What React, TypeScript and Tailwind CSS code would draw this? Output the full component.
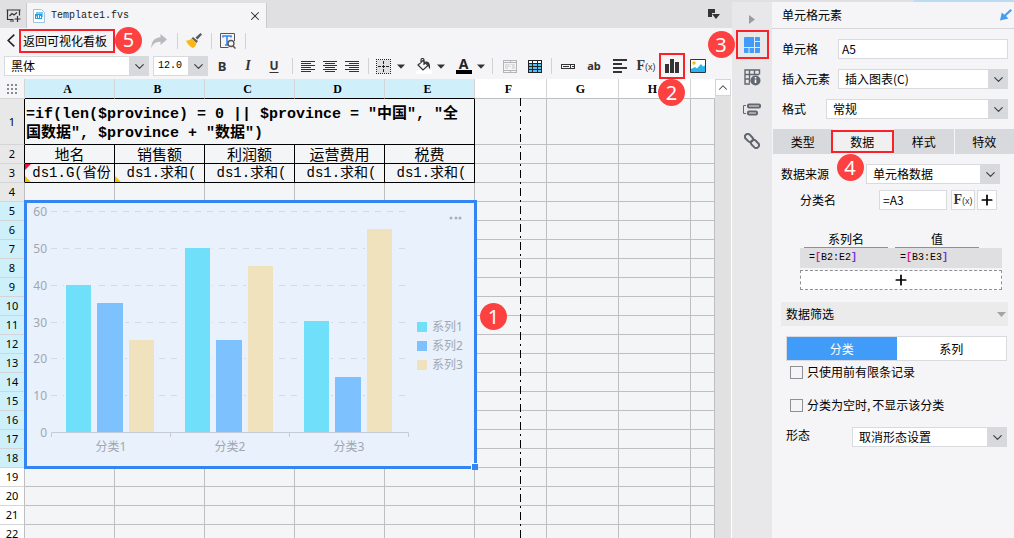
import React from "react";
import { ChevronDown, ChevronUp, X, Plus } from "lucide-react";

function Badge({ n, className }: { n: number; className: string }) {
  return (
    <span
      className={`pointer-events-none absolute z-20 flex size-[27px] items-center justify-center rounded-full bg-[#fd4141] font-['Noto_Sans'] text-xl leading-none text-white ${className}`}
    >
      {n}
    </span>
  );
}

function Select({ label, options, className, textClass = "pl-1.5" }: { label: string; options: string[]; className: string; textClass?: string }) {
  return (
    <div className={`relative h-5 ${className}`}>
      <select aria-label={label} className={`block h-full w-full appearance-none border border-[#d9dade] bg-white pr-5 leading-[18px] outline-none ${textClass}`}>
        {options.map((o) => (
          <option key={o}>{o}</option>
        ))}
      </select>
      <span className="pointer-events-none absolute inset-y-0 right-0 flex w-5 items-center justify-center bg-[#d8d9dd] text-[#444]">
        <ChevronDown size={15} strokeWidth={2} />
      </span>
    </div>
  );
}

function ToolButton({ label, className = "w-[26px]", children }: { label: string; className?: string; children: React.ReactNode }) {
  return (
    <button aria-label={label} className={`relative flex h-[26px] shrink-0 items-center justify-center ${className}`}>
      {children}
    </button>
  );
}

function Divider({ className = "w-2.5" }: { className?: string }) {
  return (
    <span className={`flex h-4 shrink-0 justify-center ${className}`}>
      <span className="w-px bg-[#d2d2d5]" />
    </span>
  );
}

function Caret() {
  return (
    <svg width="8" height="5" viewBox="0 0 8 5" fill="#333">
      <path d="M0 .5h8L4 4.8z" />
    </svg>
  );
}

function AlignIcon({ x }: { x: number[] }) {
  return (
    <svg width="14" height="11" viewBox="0 0 14 11" fill="#333" shapeRendering="crispEdges">
      {[0, 2, 4, 6, 8, 10].map((y, i) => (
        <rect key={y} x={i % 2 ? x[0] : 0} y={y} width={i % 2 ? 10 : 14} height="1" />
      ))}
    </svg>
  );
}

function FxIcon() {
  return (
    <span className="font-['Liberation_Serif',serif] text-sm font-bold leading-none text-[#333]">
      F<span className="font-['Liberation_Sans',sans-serif] text-[9px] font-normal">(x)</span>
    </span>
  );
}

function TabBar() {
  return (
    <div className="flex h-7 items-end bg-[#e0e0e2]">
      <button aria-label="新建模板" className="flex h-[25px] w-[26px] items-center justify-center">
        <svg width="15" height="13" viewBox="0 0 15 13" fill="none" stroke="#333" strokeWidth="1.2">
          <path d="M.5 1h14M1.500 1v9.500h6M13.500 1v5.500M4 12h4M3.500 7l2.500-2.500 2 1.500 3-2.500" />
          <path d="M11.500 7v6M8.500 10h6" />
        </svg>
      </button>
      <div className="flex h-[25px] w-[241px] items-center border-x border-[#c9c9cc] bg-[#f5f5f8] pl-1.5 pr-1">
        <svg width="12" height="14" viewBox="0 0 12 14">
          <path d="M.5.5h8l3 3v10H.5z" fill="#fff" stroke="#9fc4de" />
          <rect x="3" y="3" width="7" height="5" fill="#6fd0f5" />
          <rect x="2" y="5" width="7" height="5" fill="#2b9be0" />
          <path d="M3 9V7.500h1V9M5 9V6h1v3M7 9V7h1v2" fill="#fff" />
        </svg>
        <span className="ml-1.5 font-['Liberation_Mono',monospace] text-[10px] text-[#222]">Template1.fvs</span>
        <button aria-label="关闭" className="ml-auto text-[#333]">
          <X size={14} strokeWidth={1.8} />
        </button>
      </div>
      <button aria-label="窗口列表" className="ml-auto mr-3 self-center">
        <svg width="12" height="11" viewBox="0 0 12 11" fill="#333">
          <path d="M0 0h7v4H4v4H0zM4 5h8L8 10z" />
        </svg>
      </button>
    </div>
  );
}

function ActionBar() {
  return (
    <div className="flex h-[25px] items-center">
      <span className="flex w-[19px] justify-center pl-0.5">
        <svg width="8" height="13" viewBox="0 0 8 13" fill="none" stroke="#222" strokeWidth="1.600">
          <path d="M7.300.6L1.200 6.500l6.100 5.900" />
        </svg>
      </span>
      <button className="relative h-6 w-24 border-2 border-[#fb2128] text-left leading-5">
        <span className="pl-0.5">返回可视化看板</span>
        <Badge n={5} className="-top-1 left-[94px]" />
      </button>
      <ToolButton label="重做" className="ml-[31px] w-[26px]">
        <svg width="16" height="14" viewBox="0 0 16 14" fill="#b9babd">
          <path d="M9.500 0L16 5.500 9.500 11V7.800C5 7.300 2.200 9.500.3 14 .3 7.500 3.500 3.500 9.500 3.200z" />
        </svg>
      </ToolButton>
      <Divider />
      <ToolButton label="格式刷" className="w-6">
        <svg width="16" height="15" viewBox="0 0 16 15">
          <path d="M14.500 0L16 1.500 11.500 6.500 9.500 4.500z" fill="#555b66" />
          <path d="M7 4l5 4-1.500 2L5.500 5.500z" fill="#6a6257" />
          <path d="M5.500 5.500l5 4.500c-.5 3-2 4.500-4 5C3.500 13.500 1 10.500 0 7.500c2 .3 4-.5 5.500-2z" fill="#fbb812" />
        </svg>
      </ToolButton>
      <Divider />
      <ToolButton label="查找" className="w-6">
        <svg width="16" height="16" viewBox="0 0 16 16" fill="none" stroke="#555">
          <path d="M14.500 8V.5H.5v14h8" />
          <path d="M3 4.500V3h8v1.500M7 3v9M5 12h4" stroke="#3685f0" strokeWidth="1.600" />
          <circle cx="11" cy="10.500" r="3" fill="#f5f5f8" strokeWidth="1.300" />
          <path d="M13 13l2.500 2.500" strokeWidth="1.500" />
        </svg>
      </ToolButton>
      <Divider />
    </div>
  );
}

function FormatBar() {
  return (
    <div className="flex h-[26px] items-center pl-1">
      <Select label="字体" options={["黑体"]} className="w-[145px]" />
      <Select label="字号" options={["12.0"]} className="ml-1 mr-px w-[55px]" textClass="pl-1 font-['Liberation_Mono',monospace] text-[10px]" />
      <ToolButton label="加粗"><b className="font-['Noto_Sans'] text-[13px] font-bold text-[#333]">B</b></ToolButton>
      <ToolButton label="斜体"><i className="font-['Liberation_Serif',serif] text-sm font-bold text-[#333]">I</i></ToolButton>
      <ToolButton label="下划线"><u className="font-['Noto_Sans'] text-xs font-bold text-[#333] underline-offset-2">U</u></ToolButton>
      <Divider />
      <ToolButton label="左对齐" className="w-[22px]"><AlignIcon x={[0]} /></ToolButton>
      <ToolButton label="居中" className="w-[22px]"><AlignIcon x={[2]} /></ToolButton>
      <ToolButton label="右对齐" className="w-[22px]"><AlignIcon x={[4]} /></ToolButton>
      <Divider />
      <ToolButton label="边框" className="w-[21px]">
        <svg width="15" height="15" viewBox="0 0 15 15" fill="none" stroke="#222" shapeRendering="crispEdges">
          <rect x="1" y="1" width="13" height="13" fill="#e0e0e3" stroke="none" />
          <path d="M0 .5h15M0 14.500h15M.5 0v15M14.500 0v15" strokeDasharray="1 1" />
          <path d="M7.500 2v11M2 7.500h11" strokeDasharray="3 1" />
        </svg>
      </ToolButton>
      <ToolButton label="边框选项" className="mr-1.5 w-[13px]"><Caret /></ToolButton>
      <ToolButton label="填充颜色" className="w-[21px]">
        <svg width="16" height="16" viewBox="0 0 16 16" fill="none" stroke="#333">
          <rect y="12" width="16" height="4" fill="#fff" stroke="none" />
          <path d="M7 2.500L2 7l5 5 5-4.500zM5 5V2a1.500 1.500 0 0 1 3 0v5" strokeWidth="1.200" />
          <path d="M9 3.500c4-.5 5.500 2 5 7.500-1-.5-1.500-2-2-4z" fill="#333" stroke="none" />
        </svg>
      </ToolButton>
      <ToolButton label="填充选项" className="mr-1.5 w-[13px]"><Caret /></ToolButton>
      <ToolButton label="文字颜色" className="w-[21px] flex-col">
        <span className="font-['Noto_Sans'] text-sm font-bold leading-3 text-[#222]">A</span>
        <span className="h-1 w-4 bg-black" />
      </ToolButton>
      <ToolButton label="文字颜色选项" className="w-[13px]"><Caret /></ToolButton>
      <Divider />
      <ToolButton label="合并单元格" className="w-[25px]">
        <svg width="14" height="13" viewBox="0 0 14 13" fill="none" stroke="#b4b5b9" shapeRendering="crispEdges">
          <path d="M.5.5h13v12H.5zM.5 2.500h13M.5 10.500h13M7.500.5v2M7.500 10.500v2" />
          <rect x="2" y="4" width="10" height="5" fill="#dededf" stroke="none" />
          <path d="M5.500 5.500h3v3h-3v-1.500h3" stroke="#f5f5f8" />
        </svg>
      </ToolButton>
      <ToolButton label="插入表格" className="w-[25px]">
        <svg width="14" height="13" viewBox="0 0 14 13" shapeRendering="crispEdges">
          <rect width="14" height="13" fill="#222" />
          <path d="M1 1h3v2H1zM5 1h4v2H5zM10 1h3v2h-3z" fill="#fff" />
          <path d="M1 4h3v2H1zM5 4h4v2H5zM10 4h3v2h-3zM1 7h3v2H1zM5 7h4v2H5zM10 7h3v2h-3zM1 10h3v2H1zM5 10h4v2H5zM10 10h3v2h-3z" fill="#4fc3f5" />
        </svg>
      </ToolButton>
      <Divider className="w-2" />
      <ToolButton label="控件">
        <svg width="14" height="5" viewBox="0 0 14 5" fill="none" stroke="#333" shapeRendering="crispEdges">
          <path d="M.5.5h13v4H.5zM2 2.500h6M9.500 0v5M11 2.500h2" />
        </svg>
      </ToolButton>
      <ToolButton label="文本"><span className="font-['Noto_Sans'] text-[11px] font-bold text-[#333]">ab</span></ToolButton>
      <ToolButton label="富文本">
        <svg width="15" height="14" viewBox="0 0 15 14" fill="#333" shapeRendering="crispEdges">
          <path d="M0 0h14v2H0zM0 4h9v2H0zM0 8h14v2H0zM0 12h9v2H0z" />
        </svg>
      </ToolButton>
      <ToolButton label="公式"><FxIcon /></ToolButton>
      <ToolButton label="图表" className="w-[26px] border-2 border-[#fb2128]">
        <svg width="14" height="14" viewBox="0 0 14 14" fill="#333" shapeRendering="crispEdges">
          <path d="M0 5h4v9H0zM5 0h4v14H5zM10 3h4v11h-4z" />
        </svg>
        <Badge n={2} className="-left-[3px] top-6" />
      </ToolButton>
      <ToolButton label="图片">
        <svg width="16" height="14" viewBox="0 0 16 14">
          <path d="M.5.5h15v13H.5z" fill="#fff" stroke="#333" />
          <circle cx="4" cy="4" r="1.700" fill="#fbb812" />
          <path d="M1 10l4-2 2 1.500L11 5l2 2.500 2-1V13H1z" fill="#27b5f0" />
        </svg>
      </ToolButton>
    </div>
  );
}

const categories = [
  { name: "分类1", values: [40, 35, 25] },
  { name: "分类2", values: [50, 25, 45] },
  { name: "分类3", values: [30, 15, 55] },
];
const seriesColors = ["#6fdffa", "#7dc2ff", "#efe2bd"];
const barOffsets = [15, 46, 78];
const barWidths = [25, 26, 25];

function Chart() {
  const baseline = 230;
  const unit = 221 / 60;
  return (
    <svg width="449" height="265" viewBox="0 0 449 265" className="block font-['Noto_Sans','Noto_Sans_CJK_SC',sans-serif] text-xs" fill="#a0a7b1">
      {[0, 10, 20, 30, 40, 50, 60].map((v) => {
        const y = Math.round(baseline - v * unit) + 0.5;
        return (
          <g key={v}>
            <text x="22" y={y + 4} textAnchor="end">{v}</text>
            {v > 0 && <path d={`M26 ${y}H381`} stroke="#d3dae5" strokeDasharray="6 6" />}
          </g>
        );
      })}
      {categories.map((c, ci) => (
        <g key={c.name}>
          {c.values.map((v, i) => {
            const h = Math.round(v * unit);
            const x = 26 + ci * 119 + barOffsets[i];
            return (
              <g key={i}>
                <rect x={x - 2} y={baseline - h} width={barWidths[i] + 4} height={h} fill="#e9f1fc" />
                <rect x={x} y={baseline - h} width={barWidths[i]} height={h} fill={seriesColors[i]} />
              </g>
            );
          })}
          <text x={86 + ci * 119} y="249" textAnchor="middle">{c.name}</text>
        </g>
      ))}
      <path d="M26.500 235v-4.500h357V235M145.500 230.500v4.500M264.500 230.500v4.500" fill="none" stroke="#c5ccd7" />
      {["系列1", "系列2", "系列3"].map((s, i) => (
        <g key={s}>
          <rect x="392" y={120 + i * 19} width="10" height="10" fill={seriesColors[i]} />
          <text x="407" y={129 + i * 19}>{s}</text>
        </g>
      ))}
      <g fill="#a9b0bb">
        <circle cx="426" cy="16" r="1.500" />
        <circle cx="431" cy="16" r="1.500" />
        <circle cx="435" cy="16" r="1.500" />
      </g>
    </svg>
  );
}

const columns = ["A", "B", "C", "D", "E", "F", "G", "H"];
const rows = Array.from({ length: 22 }, (_, i) => i + 1);
const titles = ["地名", "销售额", "利润额", "运营费用", "税费"];

function Blank({ count }: { count: number }) {
  return (
    <>
      {Array.from({ length: count }, (_, i) => (
        <td key={i} className="border-b border-r border-[#bfbfc1]" />
      ))}
    </>
  );
}

function rowHeadClass(row: number) {
  if (row <= 3) return "bg-[#e8e8e8] border-r-black";
  if (row === 4) return "bg-[#e8e8e8] border-r-[#bfbfc1]";
  return row <= 18 ? "bg-[#cdf0fb] border-r-[#bfbfc1]" : "bg-white border-r-[#bfbfc1]";
}

function RowCells({ row }: { row: number }) {
  if (row === 1)
    return (
      <>
        <td colSpan={5} className="border-b border-r border-black pb-0 pl-px pt-1 font-['Liberation_Mono','Noto_Sans_CJK_SC',monospace] text-[15px] font-bold leading-[19px]">
          =if(len($province) = 0 || $province = "中国", "全<br />国数据", $province + "数据")
        </td>
        <Blank count={4} />
      </>
    );
  if (row === 2)
    return (
      <>
        {titles.map((t) => (
          <td key={t} className="border-b border-r border-black text-center text-[15px] leading-[18px]">{t}</td>
        ))}
        <Blank count={4} />
      </>
    );
  if (row === 3)
    return (
      <>
        {titles.map((t, i) => (
          <td key={t} className="relative overflow-hidden whitespace-nowrap border-b border-r border-black p-0 pl-1 text-center font-['Liberation_Mono','Noto_Sans_CJK_SC',monospace] text-sm leading-[18px]">
            {i === 0 ? "ds1.G(省份" : "ds1.求和("}
            {i < 2 && (
              <svg className="absolute left-0 top-0" width="6" height="18" viewBox="0 0 6 18">
                {i === 0 && <path d="M0 0h6L0 6z" fill="#f5113c" />}
                <path d="M0 12l6 6H0z" fill="#fbc100" />
              </svg>
            )}
          </td>
        ))}
        <Blank count={4} />
      </>
    );
  if (row === 5)
    return (
      <>
        <td colSpan={5} rowSpan={14} className="relative bg-[#e9f1fc] p-0 align-top">
          <Chart />
          <span className="pointer-events-none absolute -bottom-px -left-px -right-0.5 -top-0.5 border-3 border-[#3484f2]">
            <span className="absolute -bottom-1 -right-1 size-[7px] border-l border-t border-white bg-[#3484f2]" />
          </span>
          <Badge n={1} className="left-[455px] top-[101px]" />
        </td>
        <Blank count={4} />
      </>
    );
  return <Blank count={row > 5 && row <= 18 ? 4 : 9} />;
}

function Sheet() {
  return (
    <div className="flex min-h-0 flex-1 overflow-hidden">
      <div className="relative min-w-0 flex-1 overflow-hidden bg-[#f4f5f7]">
        <table className="w-full table-fixed border-separate border-spacing-0">
          <colgroup>
            <col className="w-[25px]" />
            {columns.map((c, i) => (
              <col key={c} className={i < 5 ? "w-[90px]" : "w-[72px]"} />
            ))}
            <col />
          </colgroup>
          <thead className="font-['Liberation_Serif',serif] text-xs leading-none">
            <tr className="h-5">
              <th className="border-b border-r border-[#d5d5d8] bg-[#f5f5f8] p-0" aria-label="全选">
                <svg className="mx-auto" width="10" height="10" viewBox="0 0 10 10" fill="#8a8b90">
                  {[0, 4, 8].map((y) => [0, 4, 8].map((x) => <rect key={`${x}-${y}`} x={x} y={y} width="2" height="2" />))}
                </svg>
              </th>
              {columns.map((c, i) => (
                <th key={c} className={i < 5 ? "border-b border-r border-b-black border-r-[#d5d5d8] bg-[#cff0fb] pr-1 font-bold" : "border-b border-r border-b-[#bfbfc1] border-r-[#d5d5d8] bg-white pr-1 font-bold"}>
                  {c}
                </th>
              ))}
              <th className="border-b border-[#bfbfc1] bg-white" />
            </tr>
          </thead>
          <tbody>
            {rows.map((r) => (
              <tr key={r} className={r === 1 ? "h-[46px]" : "h-[19px]"}>
                <th className={`border-b border-r border-b-[#d5d5d8] p-0 font-['Noto_Sans'] text-[11px] font-normal leading-[18px] ${rowHeadClass(r)}`}>{r}</th>
                <RowCells row={r} />
              </tr>
            ))}
          </tbody>
        </table>
        <svg className="pointer-events-none absolute bottom-0 left-[520px] top-[19px] w-px" height="100%" width="1">
          <path d="M.5 0V2000" stroke="#000" strokeDasharray="8 4 2 4" />
        </svg>
      </div>
      <div className="w-[17px] shrink-0 border-r border-white bg-[#e1e1e2]">
        <button aria-label="向上滚动" className="flex h-[17px] w-full items-center justify-center border border-[#d5d5d8] bg-white text-[#444]">
          <ChevronUp size={15} strokeWidth={1.8} />
        </button>
      </div>
    </div>
  );
}

function Rail() {
  return (
    <nav className="flex w-10 shrink-0 flex-col items-center gap-1 bg-[#e8e8ea]">
      <button aria-label="折叠面板" className="flex h-6 w-full items-end justify-center pb-0.5">
        <svg width="6" height="9" viewBox="0 0 6 9" fill="#9b9ca0"><path d="M0 0l6 4.500L0 9z" /></svg>
      </button>
      <button aria-label="单元格元素" className="relative flex h-[29px] w-[33px] items-center justify-center border-2 border-[#fb2128]">
        <svg width="16" height="16" viewBox="0 0 16 16" fill="#419cf9">
          <path d="M1 0h9v10H0V1a1 1 0 0 1 1-1zM11 0h4a1 1 0 0 1 1 1v3h-5zM11 5h5v5h-5zM0 11h4.500v5H1a1 1 0 0 1-1-1zM5.500 11H10v5H5.500zM11 11h5v4a1 1 0 0 1-1 1h-4z" />
        </svg>
        <Badge n={3} className="-left-[30px] -top-px" />
      </button>
      <button aria-label="单元格属性" className="flex h-7 w-8 items-center justify-center">
        <svg width="17" height="17" viewBox="0 0 17 17" fill="none" stroke="#62666f" strokeWidth="1.400">
          <path d="M15.500 5.500V1H1v14h5M1 5.500h14M1 10h5M5.500 1v13M10.500 1v4" />
          <circle cx="11.500" cy="11.500" r="5" fill="#62666f" stroke="none" />
          <path d="M11.500 8v1.500M11.500 10.500V14" stroke="#fff" strokeWidth="1.600" />
        </svg>
      </button>
      <button aria-label="悬浮元素" className="flex h-7 w-8 items-center justify-center">
        <svg width="18" height="13" viewBox="0 0 18 13" fill="none" stroke="#62666f">
          <path d="M3 2.500H.5v8H3" />
          <rect x="5" y="1.500" width="12" height="3" rx="1" strokeWidth="2" />
          <rect x="5" y="8.500" width="9" height="3" rx="1" strokeWidth="2" />
        </svg>
      </button>
      <button aria-label="超级链接" className="flex h-7 w-8 items-center justify-center">
        <svg width="16" height="16" viewBox="0 0 16 16" fill="none" stroke="#62666f" strokeWidth="2">
          <rect x="-1" y="-2.800" width="9" height="5.600" rx="2.800" transform="translate(2.500 2.500) rotate(45)" />
          <rect x="-1" y="-2.800" width="9" height="5.600" rx="2.800" transform="translate(8.500 8.500) rotate(45)" />
        </svg>
      </button>
    </nav>
  );
}

function Range({ text }: { text: string }) {
  return (
    <>
      =<span className="font-bold text-[#d6208c]">[</span>
      {text}
      <span className="font-bold text-[#6a35d8]">]</span>
    </>
  );
}

function Panel() {
  return (
    <aside className="flex w-[242px] shrink-0 flex-col bg-[#f5f5f8]">
      <header className="flex h-[27px] items-center justify-between border-b border-[#d5d5d8] pl-2.5 pr-0.5">
        <h2>单元格元素</h2>
        <svg width="12" height="12" viewBox="0 0 12 12" fill="#419cf9">
          <path d="M10.500 0L12 1.500 6 7l2.500 2.500L0 11.500 1.800 3.500 4.300 5.700z" />
        </svg>
      </header>
      <div className="flex flex-col gap-2.5 py-2.5 pl-2.5 pr-1.5">
        <div className="flex items-center">
          <label htmlFor="cell" className="w-14">单元格</label>
          <input id="cell" defaultValue="A5" className="h-5 min-w-0 flex-1 border border-[#d9dade] bg-white pb-0.5 pl-[3px] outline-none" />
        </div>
        <div className="flex items-center">
          <span className="w-14">插入元素</span>
          <Select label="插入元素" options={["插入图表(C)"]} className="flex-1" />
        </div>
        <div className="flex items-center">
          <span className="w-11">格式</span>
          <Select label="格式" options={["常规"]} className="flex-1" />
        </div>
      </div>
      <div className="relative grid h-[25px] grid-cols-4 gap-px pl-px">
        {["类型", "数据", "样式", "特效"].map((t) =>
          t === "数据" ? (
            <button key={t} className="relative my-px -ml-[3px] -mr-px border-2 border-[#fb2128] bg-[#f0f0f1]">
              {t}
              <Badge n={4} className="left-1 top-[22px]" />
            </button>
          ) : (
            <button key={t} className="bg-[#d8d9dd]">{t}</button>
          ),
        )}
      </div>
      <div className="mt-2.5 flex items-center pl-[9px] pr-3.5">
        <span className="w-[85px]">数据来源</span>
        <Select label="数据来源" options={["单元格数据"]} className="flex-1" />
      </div>
      <div className="mt-1.5 flex items-center pl-7 pr-4">
        <label htmlFor="category" className="w-[79px]">分类名</label>
        <input id="category" defaultValue="=A3" className="h-5 w-[68px] border border-[#d9dade] bg-white pb-0.5 pl-[3px] outline-none" />
        <button aria-label="公式" className="ml-1 flex h-5 w-6 items-center justify-center border border-[#d9dade] bg-white"><FxIcon /></button>
        <button aria-label="添加" className="ml-0.5 flex size-5 items-center justify-center border border-[#d9dade] bg-white"><Plus size={16} strokeWidth={2.6} /></button>
      </div>
      <table className="ml-7 mr-3 mt-5 table-fixed border-separate border-spacing-0">
        <thead>
          <tr>
            <th className="w-[91px] p-0 pl-1 font-normal"><span className="block w-[84px] border-b border-[#8f9094] leading-[17px]">系列名</span></th>
            <th className="p-0 pl-1 font-normal"><span className="block w-[84px] border-b border-[#8f9094] leading-[17px]">值</span></th>
          </tr>
        </thead>
        <tbody className="bg-[#dfdfe2] font-['Liberation_Mono',monospace] text-[10px]">
          <tr className="h-5">
            <td className="p-0 pl-[9px]"><Range text="B2:E2" /></td>
            <td className="p-0 pl-[9px]"><Range text="B3:E3" /></td>
          </tr>
        </tbody>
      </table>
      <button aria-label="添加系列" className="ml-7 mr-3 mt-0.5 flex h-5 items-center justify-center border border-dashed border-[#8f9094] bg-white">
        <Plus size={16} strokeWidth={2.6} />
      </button>
      <button className="ml-[9px] mr-1.5 mt-3 flex h-6 items-center justify-between bg-[#ebebec] pl-[5px] pr-0.5">
        数据筛选
        <svg width="9" height="5" viewBox="0 0 9 5" fill="#a3a4a8"><path d="M0 0h9L4.500 5z" /></svg>
      </button>
      <div className="ml-3.5 mr-[7px] mt-2.5 grid h-[25px] grid-cols-2 border border-[#d9dade] bg-white">
        <button className="bg-[#419cf9] text-white">分类</button>
        <button>系列</button>
      </div>
      <label className="ml-[18px] mt-[3px] flex h-4 items-center gap-1">
        <input type="checkbox" className="size-[13px] appearance-none border border-[#8f9094] bg-[#f5f5f8]" />
        只使用前有限条记录
      </label>
      <label className="ml-[18px] mt-[17px] flex h-4 items-center gap-1">
        <input type="checkbox" className="size-[13px] appearance-none border border-[#8f9094] bg-[#f5f5f8]" />
        <span>分类为空时<span className="pr-0.5">,</span>不显示该分类</span>
      </label>
      <div className="mt-3.5 flex items-start pl-3.5 pr-[7px]">
        <span className="w-[66px]">形态</span>
        <Select label="形态" options={["取消形态设置"]} className="flex-1" />
      </div>
    </aside>
  );
}

export default function App() {
  return (
    <div className="flex h-screen overflow-hidden bg-[#f5f5f8] font-['Noto_Sans_CJK_SC',sans-serif] text-xs leading-4 text-black">
      <main className="flex min-w-0 flex-1 flex-col">
        <TabBar />
        <ActionBar />
        <FormatBar />
        <Sheet />
      </main>
      <div className="flex shrink-0 flex-col">
        <div className="flex h-0.5 bg-[#e0e0e2]">
          <span className="ml-auto w-[100px] bg-[#b9dcf3]" />
        </div>
        <div className="flex flex-1">
          <Rail />
          <Panel />
        </div>
      </div>
    </div>
  );
}
